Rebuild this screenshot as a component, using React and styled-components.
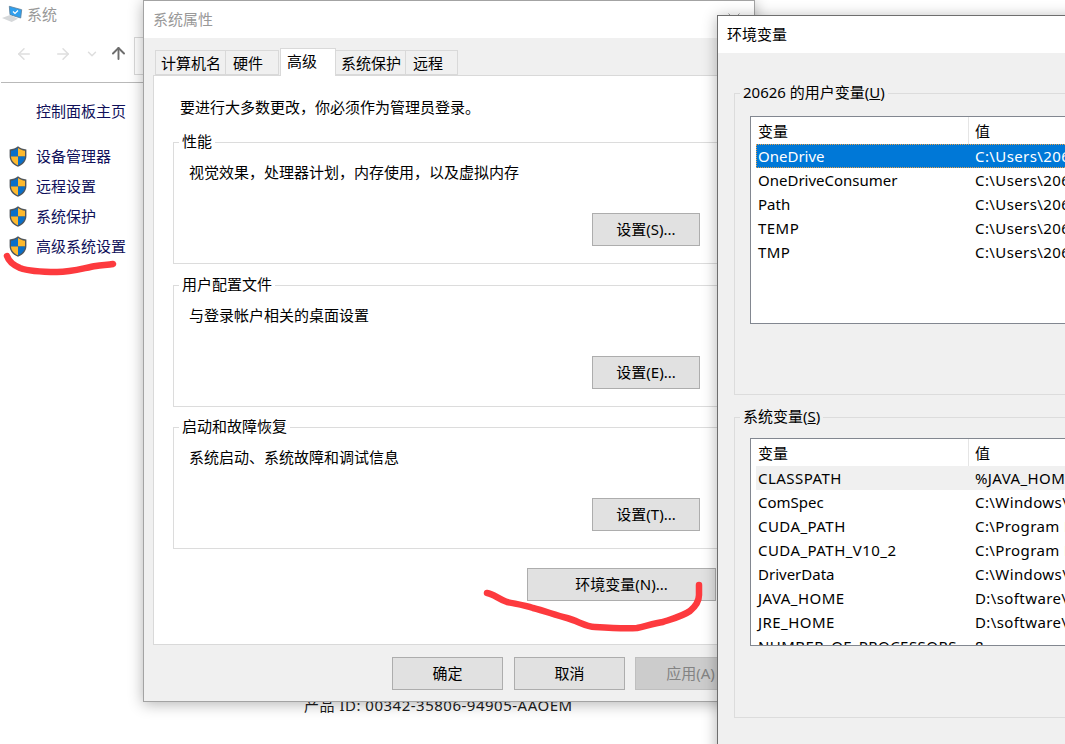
import styled, { createGlobalStyle } from 'styled-components'
import { ArrowLeft, ArrowRight, ArrowUp, ChevronDown } from 'lucide-react'

const GlobalStyle = createGlobalStyle`
   html, body {
      margin: 0;
      height: 100%;
      overflow: hidden;
      background: #fff;
   }
   * {
      box-sizing: border-box;
   }
`

const FONT = `"Noto Sans", "Noto Sans CJK SC", sans-serif`

const Desktop = styled.div`
   position: relative;
   width: 1065px;
   height: 744px;
   overflow: hidden;
   font-family: ${FONT};
   font-size: 15px;
   line-height: 20px;
   color: #000;
`

// 뒤쪽 탐색기 창
const Explorer = styled.div`
   display: flex;
   flex-direction: column;
   height: 100%;
   background: #fff;
`

const ExplorerTitle = styled.div`
   display: flex;
   align-items: center;
   gap: 4px;
   height: 30px;
   padding: 0 0 3px 2px;
   color: #999;
`

const Toolbar = styled.div`
   display: flex;
   align-items: center;
   height: 53px;
   margin-left: 1px;
   padding: 0 0 5px 3px;
   border-bottom: 1px solid #b9b9b9;
`

const NavButton = styled.div`
   display: flex;
   justify-content: center;
   width: ${(props) => props.$w}px;
   color: ${(props) => (props.$active ? '#6d6d6d' : '#dedede')};
`

const AddressBox = styled.div`
   display: flex;
   align-items: center;
   width: 200px;
   height: 38px;
   margin-top: 5px;
   padding-left: 4px;
   border: 1px solid #d9d9d9;
`

const ExplorerBody = styled.div`
   display: flex;
   flex: 1;
`

const Sidebar = styled.nav`
   width: 134px;
   padding-top: 14px;
`

const HomeLink = styled.div`
   height: 30px;
   margin-bottom: 14px;
   padding-left: 36px;
   line-height: 28px;
   color: #10105a;
`

const SideLink = styled.div`
   display: flex;
   align-items: center;
   gap: 9px;
   height: 30px;
   padding-left: 9px;
   color: #10105a;
`

const SideLabel = styled.span`
   margin-top: -1px;
`

const ExplorerMain = styled.div`
   display: flex;
   flex: 1;
   align-items: flex-end;
   padding: 0 0 29px 170px;
   color: #1c1c1c;
   letter-spacing: 0.5px;
`

// 창 공통
const Dialog = styled.section`
   position: absolute;
   left: 143px;
   top: 0;
   display: flex;
   flex-direction: column;
   width: 612px;
   height: 702px;
   border: 1px solid #a3a3a3;
   background: #f0f0f0;
   box-shadow: 0 2px 14px rgba(0, 0, 0, 0.3);
`

const EnvWindow = styled(Dialog)`
   left: 717px;
   top: 15px;
   width: 500px;
   height: 760px;
   border-color: #6e6e6e;
`

const TitleBar = styled.header`
   display: flex;
   align-items: center;
   justify-content: space-between;
   flex: none;
   height: 37px;
   padding: 0 14px 2px 9px;
   background: #fff;
   color: ${(props) => (props.$active ? '#000' : '#999')};
`

const TabStrip = styled.div`
   display: flex;
   align-items: flex-end;
   flex: none;
   height: 25px;
   margin-top: 12px;
   padding-left: 11px;
`

const Tab = styled.div`
   position: relative;
   z-index: ${(props) => (props.$selected ? 1 : 0)};
   width: ${(props) => props.$w}px;
   height: ${(props) => (props.$selected ? 28 : 25)}px;
   margin-bottom: ${(props) => (props.$selected ? -1 : 0)}px;
   margin-left: ${(props) => (props.$selected ? 1 : 0)}px;
   padding: 2px 0 0 ${(props) => props.$pad}px;
   border: 1px solid #d9d9d9;
   border-left-width: ${(props) => (props.$selected || props.$first ? 1 : 0)}px;
   border-bottom: ${(props) => (props.$selected ? 'none' : '1px solid #d9d9d9')};
   background: ${(props) => (props.$selected ? '#fff' : '#f0f0f0')};
`

const TabPanel = styled.div`
   display: flex;
   flex-direction: column;
   flex: none;
   height: 570px;
   margin: 0 9px;
   padding: 21px 19px 0;
   border: 1px solid #d9d9d9;
   background: #fff;
`

const Hint = styled.p`
   margin: 0 0 15px 7px;
`

const Group = styled.fieldset`
   display: flex;
   flex-direction: column;
   height: ${(props) => props.$h}px;
   min-width: 0;
   margin: ${(props) => props.$mt || 0}px 0 0;
   padding: 0;
   border: 1px solid #dcdcdc;
`

const GroupLegend = styled.legend`
   margin-left: 5px;
   padding: 0 3px 1px;
   line-height: 19px;
`

const GroupText = styled.p`
   margin: 10px 0 0 15px;
`

const Button = styled.button`
   width: ${(props) => props.$w || 111}px;
   height: 33px;
   padding: 0 0 2px;
   border: 1px solid ${(props) => (props.disabled ? '#bfbfbf' : '#adadad')};
   background: ${(props) => (props.disabled ? '#cccccc' : '#e1e1e1')};
   color: ${(props) => (props.disabled ? '#838383' : '#000')};
   font: inherit;
   &:disabled {
      margin-left: -1px;
   }
`

const GroupButton = styled(Button)`
   align-self: flex-end;
   margin: 31px 24px 0 0;
`

const EnvButton = styled(Button)`
   align-self: flex-end;
   margin: 19px 9px 0 0;
`

const Footer = styled.footer`
   display: flex;
   justify-content: flex-end;
   gap: 11px;
   padding: 12px 8px 0 0;
`

const EnvBody = styled.div`
   flex: 1;
   padding: 30px 0 0 16px;
`

const EnvGroup = styled(Group)`
   width: 470px;
`

const List = styled.div`
   width: 420px;
   height: 208px;
   margin: ${(props) => props.$mt}px 0 0 15px;
   border: 1px solid #828790;
   background: #fff;
   overflow: hidden;
`

const ListHead = styled.div`
   display: flex;
   height: 27px;
   line-height: 28px;
`

const HeadCell = styled.div`
   width: ${(props) => props.$w}px;
   padding-left: ${(props) => props.$pad}px;
   border-right: ${(props) => (props.$divider ? '1px solid #e5e5e5' : 'none')};
`

const Row = styled.div`
   display: flex;
   flex: none;
   height: 24px;
   margin-left: 5px;
   line-height: 24px;
   white-space: nowrap;
   background: ${(props) => (props.$selected ? '#0078d7' : props.$hover ? '#f0f0f0' : 'transparent')};
   color: ${(props) => (props.$selected ? '#fff' : '#000')};
   outline: ${(props) => (props.$selected ? '1px dotted #e8a24c' : 'none')};
   outline-offset: -1px;
`

const NameCell = styled.div`
   width: 219px;
   padding-left: 2px;
   letter-spacing: ${(props) => (props.$caps ? 0.45 : 0)}px;
`

const ValueCell = styled.div`
   letter-spacing: 0.4px;
`

const Stroke = styled.svg`
   position: absolute;
   left: 0;
   top: 0;
   pointer-events: none;
`

const userVars = [
   ['OneDrive', 'C:\\Users\\20626\\OneDrive'],
   ['OneDriveConsumer', 'C:\\Users\\20626\\OneDrive'],
   ['Path', 'C:\\Users\\20626\\AppData'],
   ['TEMP', 'C:\\Users\\20626\\AppData'],
   ['TMP', 'C:\\Users\\20626\\AppData'],
]

const systemVars = [
   ['CLASSPATH', '%JAVA_HOME%\\lib'],
   ['ComSpec', 'C:\\Windows\\system32'],
   ['CUDA_PATH', 'C:\\Program Files'],
   ['CUDA_PATH_V10_2', 'C:\\Program Files'],
   ['DriverData', 'C:\\Windows\\System32'],
   ['JAVA_HOME', 'D:\\software\\java'],
   ['JRE_HOME', 'D:\\software\\java'],
   ['NUMBER_OF_PROCESSORS', '8'],
]

const groups = [
   { title: '性能', text: '视觉效果，处理器计划，内存使用，以及虚拟内存', button: '设置(S)...', mt: 0 },
   { title: '用户配置文件', text: '与登录帐户相关的桌面设置', button: '设置(E)...', mt: 11 },
   { title: '启动和故障恢复', text: '系统启动、系统故障和调试信息', button: '设置(T)...', mt: 10 },
]

const tabs = [
   { name: '计算机名', w: 71, pad: 5, first: true },
   { name: '硬件', w: 53, pad: 7 },
   { name: '高级', w: 56, pad: 6, selected: true },
   { name: '系统保护', w: 70, pad: 5 },
   { name: '远程', w: 52, pad: 7 },
]

const Shield = () => (
   <svg width="18" height="21" viewBox="0 0 18 21">
      <path d="M9 .3C6.800 2.300 3.800 3.300.6 3.400V10c0 5.200 3.600 8.900 8.400 10.800 4.800-1.900 8.400-5.600 8.400-10.800V3.400C14.200 3.300 11.200 2.300 9 .3z" fill="#4f555c" />
      <path d="M9 2C7 3.600 4.500 4.500 2 4.700V10.500H9z" fill="#0a6fc8" />
      <path d="M9 2C11 3.600 13.500 4.500 16 4.700V10.500H9z" fill="#fdb92e" />
      <path d="M2 10.500C2.200 14.700 5.200 17.700 9 19.300V10.500z" fill="#fdb92e" />
      <path d="M16 10.500C15.800 14.700 12.800 17.700 9 19.300V10.500z" fill="#0a6fc8" />
   </svg>
)

const LaptopIcon = () => (
   <svg width="21" height="19" viewBox="0 0 21 19">
      <path d="M7.300 2.300L19.700 5.700 18.700 14 8 10.700z" fill="#2f9fee" stroke="#5c7f99" strokeWidth=".8" />
      <path d="M11 7.500l2 2 3-3" fill="none" stroke="#fff" strokeWidth="1.200" />
      <path d="M0 14l8-3 8 3.700L9.700 18z" fill="#d6d8da" />
   </svg>
)

const CloseIcon = () => (
   <svg width="12" height="12" viewBox="0 0 12 12">
      <path d="M.5.5l11 11M11.500.5l-11 11" stroke="#999" strokeWidth="1" fill="none" />
   </svg>
)

const VarList = ({ rows, mt, selectedName, hoverName }) => (
   <List $mt={mt}>
      <ListHead>
         <HeadCell $w={218} $pad={7} $divider>变量</HeadCell>
         <HeadCell $w={100} $pad={6}>值</HeadCell>
      </ListHead>
      {rows.map(([name, value]) => (
         <Row key={name} $selected={name === selectedName} $hover={name === hoverName}>
            <NameCell $caps={/^[A-Z0-9_]+$/.test(name)}>{name}</NameCell>
            <ValueCell>{value}</ValueCell>
         </Row>
      ))}
   </List>
)

function App() {
   return (
      <Desktop>
         <GlobalStyle />
         <Explorer>
            <ExplorerTitle>
               <LaptopIcon />
               系统
            </ExplorerTitle>
            <Toolbar>
               <NavButton $w={39}><ArrowLeft size={18} /></NavButton>
               <NavButton $w={39}><ArrowRight size={18} /></NavButton>
               <NavButton $w={20}><ChevronDown size={14} strokeWidth={2.5} /></NavButton>
               <NavButton $w={32} $active><ArrowUp size={19} strokeWidth={2.4} /></NavButton>
               <AddressBox />
            </Toolbar>
            <ExplorerBody>
               <Sidebar>
                  <HomeLink>控制面板主页</HomeLink>
                  {['设备管理器', '远程设置', '系统保护', '高级系统设置'].map((item) => (
                     <SideLink key={item}>
                        <Shield />
                        <SideLabel>{item}</SideLabel>
                     </SideLink>
                  ))}
               </Sidebar>
               <ExplorerMain>产品 ID: 00342-35806-94905-AAOEM</ExplorerMain>
            </ExplorerBody>
         </Explorer>

         <Dialog>
            <TitleBar>
               系统属性
               <CloseIcon />
            </TitleBar>
            <TabStrip>
               {tabs.map((tab) => (
                  <Tab key={tab.name} $w={tab.w} $pad={tab.pad} $selected={tab.selected} $first={tab.first}>
                     {tab.name}
                  </Tab>
               ))}
            </TabStrip>
            <TabPanel>
               <Hint>要进行大多数更改，你必须作为管理员登录。</Hint>
               {groups.map((group) => (
                  <Group key={group.title} $h={132} $mt={group.mt}>
                     <GroupLegend>{group.title}</GroupLegend>
                     <GroupText>{group.text}</GroupText>
                     <GroupButton $w={108}>{group.button}</GroupButton>
                  </Group>
               ))}
               <EnvButton $w={189}>环境变量(N)...</EnvButton>
            </TabPanel>
            <Footer>
               <Button>确定</Button>
               <Button>取消</Button>
               <Button disabled>应用(A)</Button>
            </Footer>
         </Dialog>

         <EnvWindow>
            <TitleBar $active>环境变量</TitleBar>
            <EnvBody>
               <EnvGroup $h={312}>
                  <GroupLegend>20626 的用户变量(<u>U</u>)</GroupLegend>
                  <VarList rows={userVars} mt={13} selectedName="OneDrive" />
               </EnvGroup>
               <EnvGroup $h={311} $mt={12}>
                  <GroupLegend>系统变量(<u>S</u>)</GroupLegend>
                  <VarList rows={systemVars} mt={11} hoverName="CLASSPATH" />
               </EnvGroup>
            </EnvBody>
         </EnvWindow>

         <Stroke width="1065" height="744" fill="none" stroke="#fd3a3e" strokeWidth="6.500" strokeLinecap="round" strokeLinejoin="round">
            <path d="M7 256C9 262 13 265 20 268C28 271 40 272 57 272C72 272 84 268 96 266C102 265 108 265 113 264" />
            <path d="M487 593C494 594 498 599 507 602C516 604 524 605 533 608C545 611 555 615 567 618C578 621 586 627 595 627C610 628 625 629 637 628C646 626 655 623 663 622C672 619 683 616 690 611C696 606 699 600 699 595V585" />
         </Stroke>
      </Desktop>
   )
}

export default App
